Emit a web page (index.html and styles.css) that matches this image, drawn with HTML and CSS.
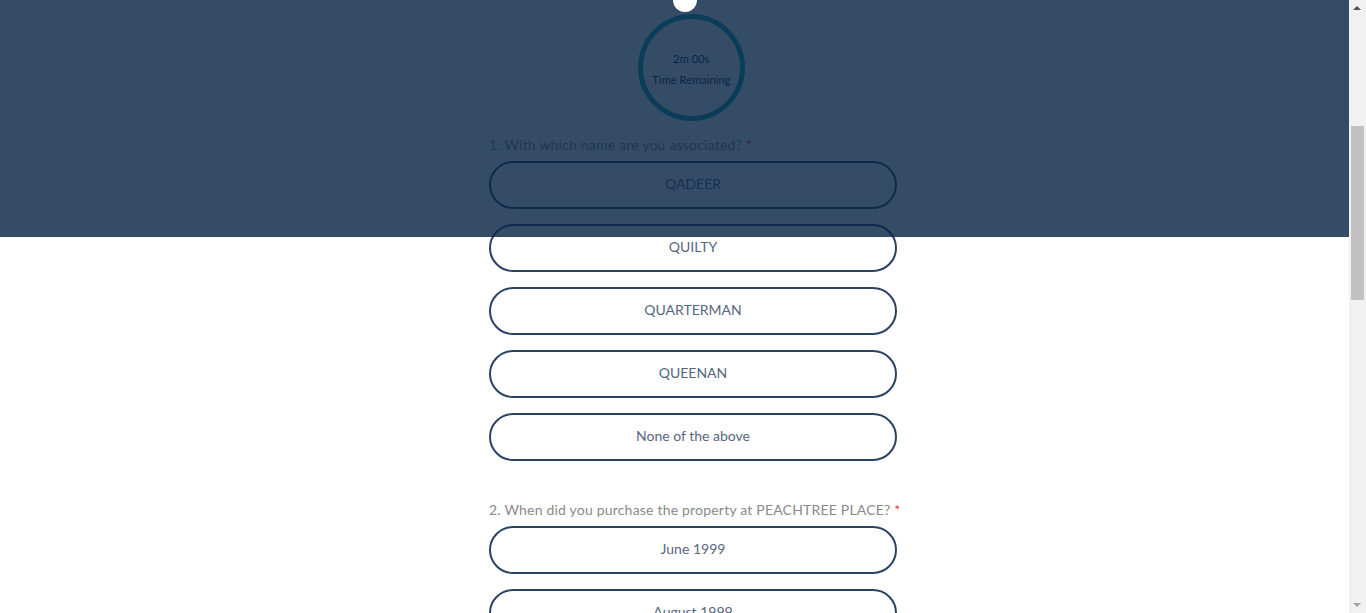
FILE: index.html
```html
<!DOCTYPE html>
<html lang="en">
<head>
<meta charset="utf-8">
<title>Verification</title>
<link rel="stylesheet" href="styles.css">
</head>
<body>
<div class="viewport">
  <div class="page">
    <div class="form">
      <div class="timer">
        <div class="ring">
          <span class="time">2m 00s</span>
          <span class="caption">Time Remaining</span>
        </div>
      </div>

      <div class="question">
        <div class="label">1. With which name are you associated? <span class="req">*</span></div>
        <div class="options">
          <button class="option">QADEER</button>
          <button class="option">QUILTY</button>
          <button class="option">QUARTERMAN</button>
          <button class="option">QUEENAN</button>
          <button class="option">None of the above</button>
        </div>
      </div>

      <div class="question">
        <div class="label">2. When did you purchase the property at PEACHTREE PLACE? <span class="req">*</span></div>
        <div class="options">
          <button class="option">June 1999</button>
          <button class="option">August 1999</button>
        </div>
      </div>
    </div>
  </div>
  <div class="overlay"></div>
  <span class="dot"></span>
</div>
<div class="scrollbar">
  <span class="arrow up"></span>
  <span class="thumb"></span>
  <span class="arrow down"></span>
</div>
</body>
</html>
```

FILE: styles.css
```css
html, body {
  margin: 0;
  padding: 0;
}
body {
  font-family: Lato, "Open Sans", "Noto Sans", sans-serif;
  background: #ffffff;
  display: flex;
  height: 613px;
  overflow: hidden;
}
.viewport {
  flex: 1;
  position: relative;
  height: 613px;
  overflow: hidden;
}
.page {
  display: flex;
  justify-content: center;
  padding-left: 37px;
}
.form {
  width: 408px;
  display: flex;
  flex-direction: column;
}
.timer {
  display: flex;
  justify-content: center;
  padding-top: 14px;
  margin-bottom: 14px;
  padding-right: 3px;
}
.ring {
  width: 107px;
  height: 107px;
  box-sizing: border-box;
  border: 5px solid #16a6ac;
  border-radius: 50%;
  display: flex;
  flex-direction: column;
  align-items: center;
  justify-content: center;
  color: #0a1e3c;
  font-size: 11px;
  line-height: 21px;
  padding-top: 2px;
  letter-spacing: 0.1px;
}
.question {
  margin-bottom: 39px;
}
.label {
  font-size: 14px;
  line-height: 20px;
  color: #8a8a8a;
  margin-bottom: 6px;
  letter-spacing: 0.2px;
  white-space: nowrap;
}
.req {
  color: #e8363c;
}
.options {
  display: flex;
  flex-direction: column;
  gap: 15px;
}
.option {
  height: 48px;
  box-sizing: border-box;
  border: 2px solid #2b4263;
  border-radius: 24px;
  background: #ffffff;
  font-family: Lato, "Open Sans", "Noto Sans", sans-serif;
  font-size: 14px;
  color: #56667f;
  text-align: center;
  padding: 0 0 3px;
}
.overlay {
  position: absolute;
  top: 0;
  left: 0;
  right: 0;
  height: 237px;
  background: rgba(9, 36, 70, 0.82);
  z-index: 1;
}
.dot {
  position: absolute;
  top: -12px;
  left: 673px;
  width: 24px;
  height: 24px;
  border-radius: 50%;
  background: #ffffff;
  z-index: 2;
}
.scrollbar {
  width: 17px;
  height: 613px;
  background: #f1f1f1;
  position: relative;
  flex: none;
}
.thumb {
  position: absolute;
  left: 2px;
  right: 2px;
  top: 126px;
  height: 174px;
  background: #c1c1c1;
}
.arrow {
  position: absolute;
  left: 4px;
  width: 0;
  height: 0;
  border-left: 4px solid transparent;
  border-right: 4px solid transparent;
}
.arrow.up {
  top: 6px;
  border-bottom: 4px solid #505050;
}
.arrow.down {
  bottom: 6px;
  border-top: 4px solid #a3a3a3;
}
```
